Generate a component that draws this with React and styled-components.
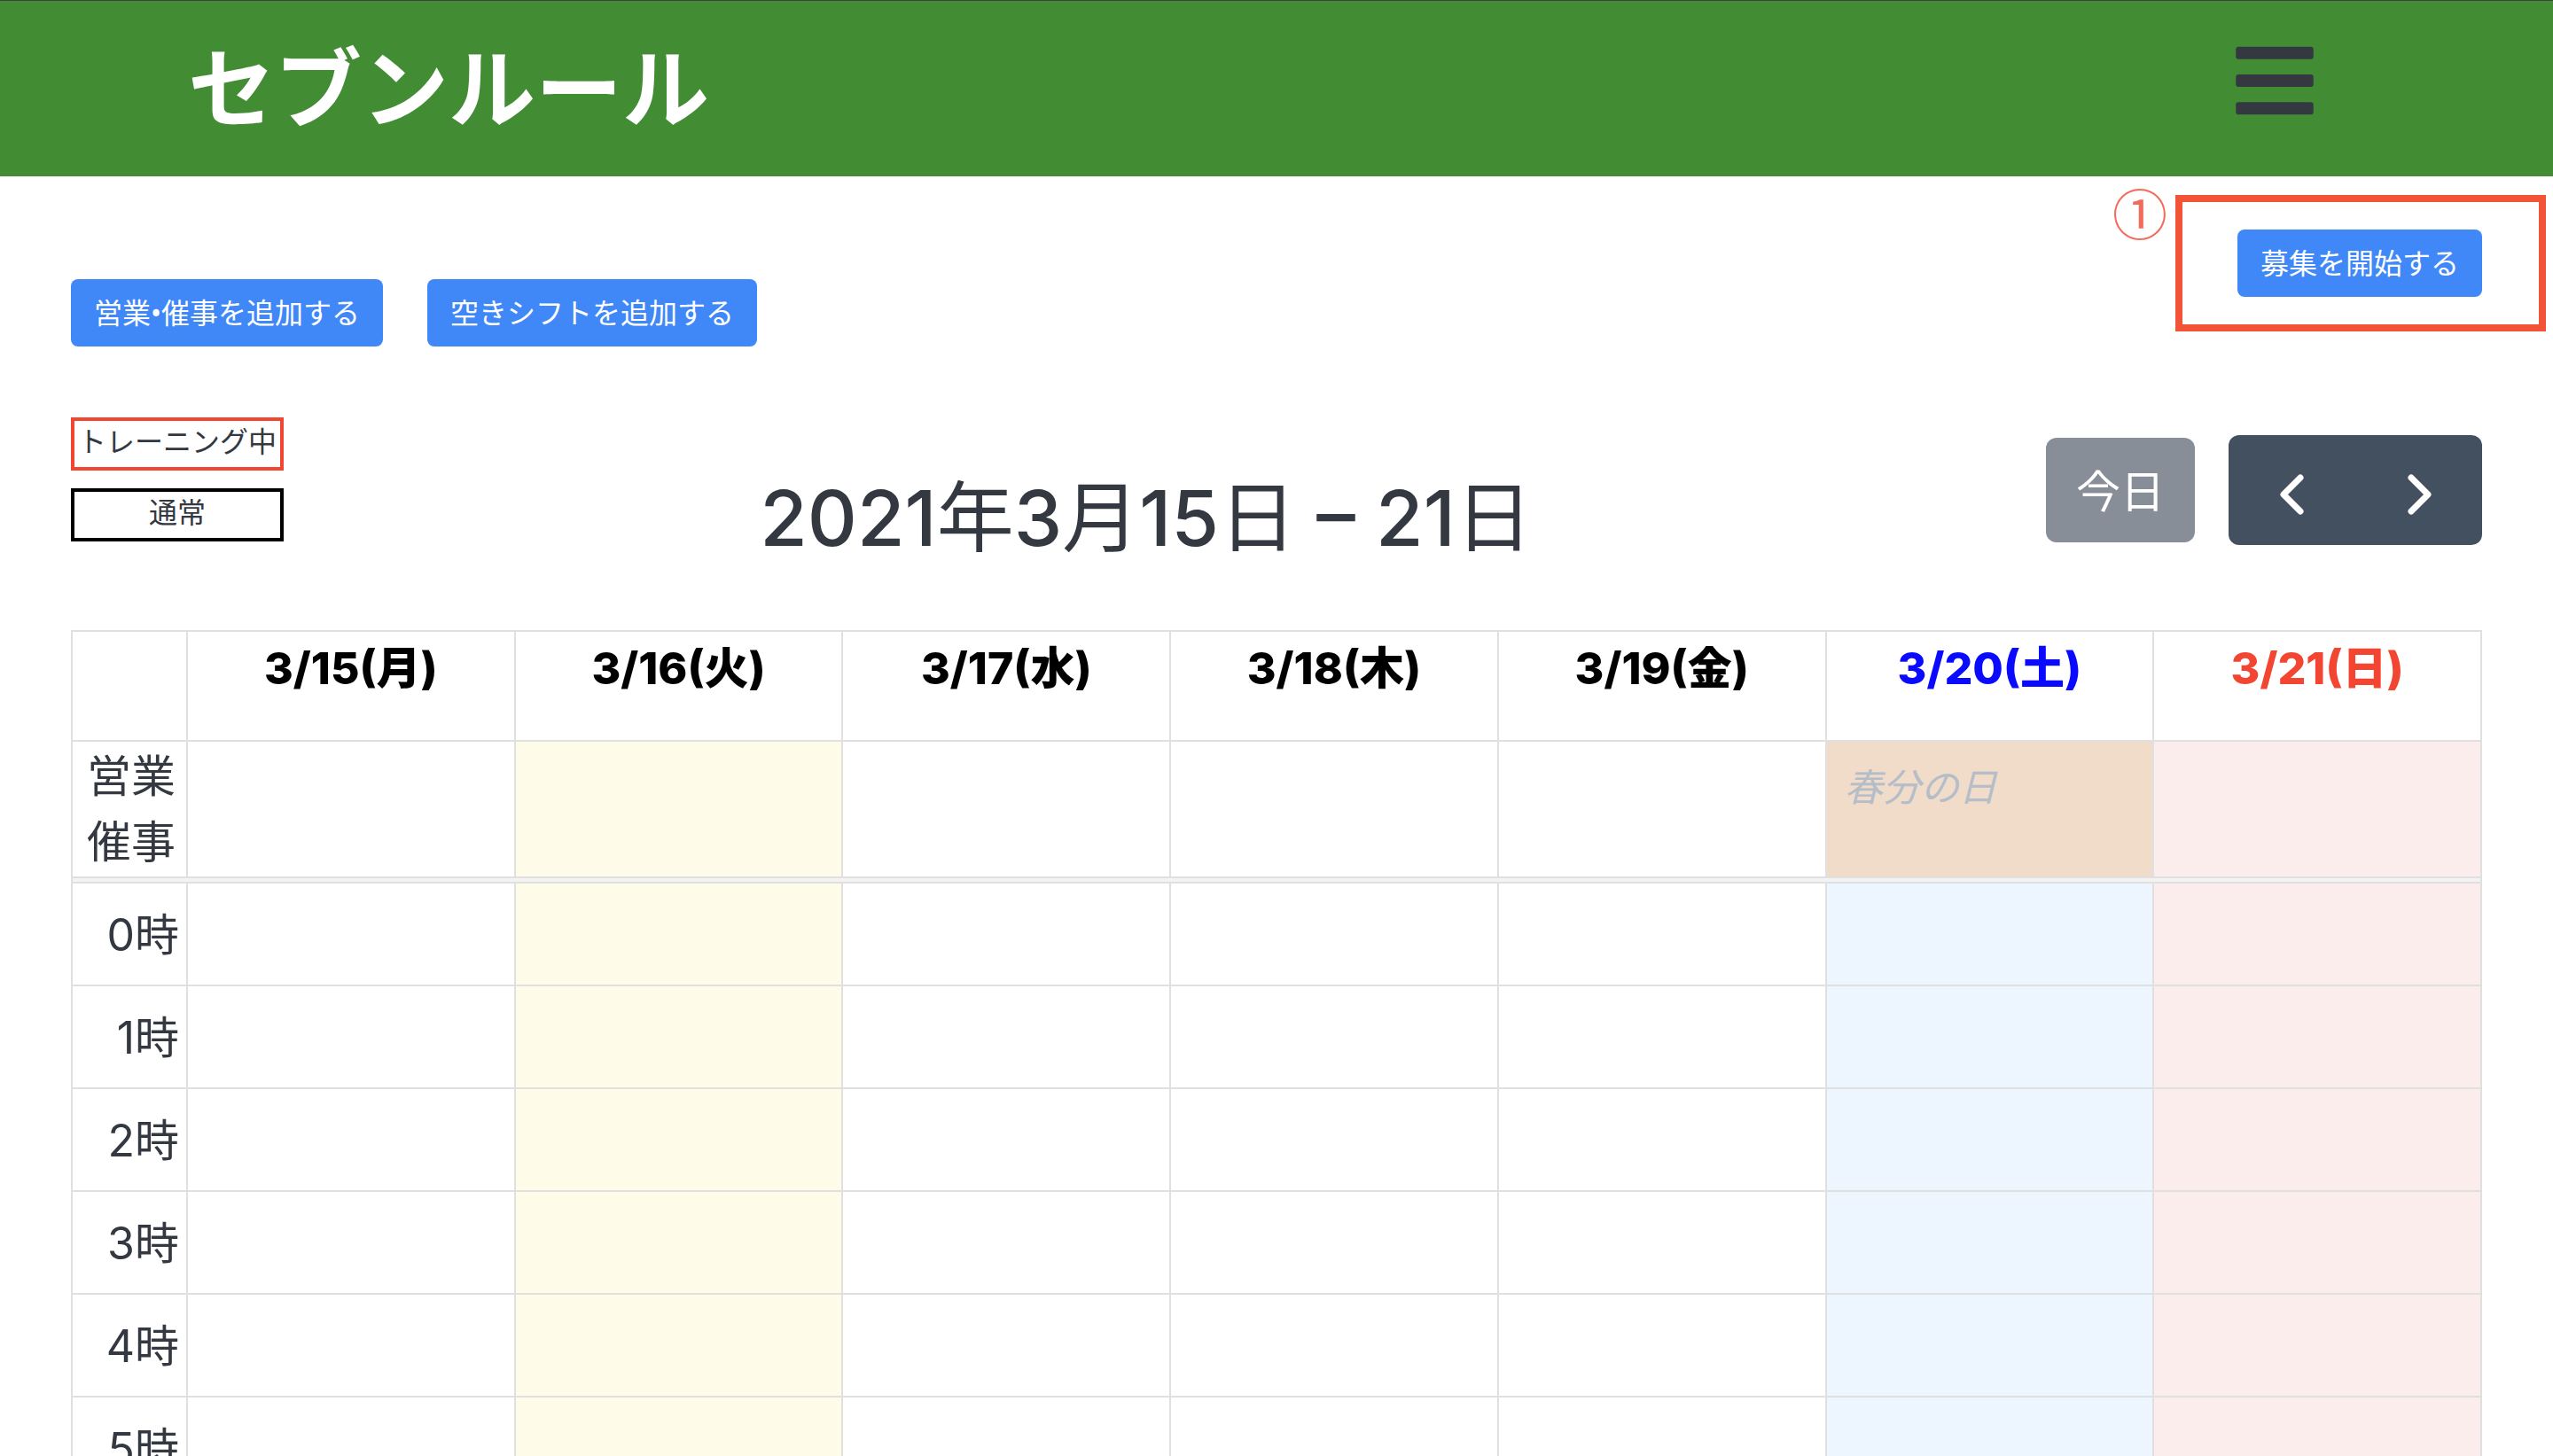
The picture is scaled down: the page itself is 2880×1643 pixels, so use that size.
import React from "react";
import styled, { createGlobalStyle } from "styled-components";

const GlobalStyle = createGlobalStyle`
  *, *::before, *::after { box-sizing: border-box; }
  body {
    margin: 0;
    background: #fff;
    color: #343840;
    font-family: Inter, "Noto Sans CJK JP", sans-serif;
    font-size: 32px;
    line-height: 48px;
  }
  button { font-family: inherit; cursor: pointer; }
`;

const Page = styled.div`
  height: 100vh;
  overflow: hidden;
`;

const Header = styled.header`
  display: flex;
  align-items: flex-start;
  justify-content: space-between;
  height: 199px;
  padding: 0 270px 0 212px;
  border-top: 1px solid #3f3f3f;
  background: #428c34;
`;

const Brand = styled.h1`
  margin: 28px 0 0;
  color: #fff;
  font-size: 98px;
  font-weight: 700;
  line-height: 144px;
`;

const MenuButton = styled.button`
  display: flex;
  margin-top: 40px;
  padding: 0;
  border: 0;
  background: none;
  color: #343840;

  svg { width: 88px; height: 100px; }
`;

const Main = styled.main`
  padding: 60px 80px 0;
`;

const Actions = styled.div`
  display: flex;
  align-items: flex-start;
  justify-content: space-between;
  height: 132px;
`;

const AddButtons = styled.div`
  display: flex;
  align-self: flex-end;
  gap: 50px;
`;

const PrimaryButton = styled.button`
  height: 76px;
  padding: 0 26px;
  border: 0;
  border-radius: 8px;
  background: #4088f7;
  color: #fff;
  font-family: "Noto Sans", "Noto Sans CJK JP", sans-serif;
  font-size: 32px;
  line-height: 48px;
  white-space: nowrap;
`;

const Highlighted = styled.div`
  position: relative;
  display: flex;
`;

const HighlightFrame = styled.div`
  position: absolute;
  inset: -39px -72px -39px -70px;
  border: 8px solid #f35336;
  pointer-events: none;
`;

const StepMark = styled.span`
  position: absolute;
  right: 355px;
  top: -52px;
  color: #f46a5b;
  font-family: "Noto Sans CJK JP", sans-serif;
  font-size: 62px;
  font-weight: 400;
  line-height: 64px;
`;

const CalendarBar = styled.div`
  display: grid;
  grid-template-columns: 240px 1fr auto;
  align-items: start;
  height: 240px;
  margin-top: 80px;
`;

const Legend = styled.ul`
  display: grid;
  gap: 20px;
  margin: 0;
  padding: 0;
  list-style: none;
`;

const LegendItem = styled.li`
  height: 60px;
  border: 4px solid ${(p) => p.$color};
  line-height: 48px;
  text-align: center;
  white-space: nowrap;
`;

const Period = styled.h2`
  margin: 48px 42px 0 0;
  font-size: 87px;
  font-weight: 500;
  line-height: 132px;
  text-align: center;
  white-space: nowrap;
`;

const Unit = styled.span`
  font-weight: 400;
`;

const Controls = styled.div`
  display: flex;
  align-items: center;
  gap: 38px;
  margin-top: 20px;
`;

const TodayButton = styled.button`
  width: 168px;
  height: 118px;
  padding: 4px 0 0;
  border: 0;
  border-radius: 12px;
  background: #888e98;
  color: #fff;
  font-size: 50px;
  line-height: 74px;
`;

const Pager = styled.div`
  display: flex;
  overflow: hidden;
  border-radius: 12px;
`;

const PageButton = styled.button`
  display: grid;
  place-items: center;
  width: 143px;
  height: 124px;
  padding: 10px 0 0;
  border: 0;
  background: #43505f;
  color: #fff;

  svg { width: 28px; height: 46px; }
`;

const Calendar = styled.table`
  width: 100%;
  table-layout: fixed;
  border-collapse: separate;
  border-spacing: 0;
  border: solid #e0e0e0;
  border-width: 2px 0 0 2px;
  font-size: 50px;
  line-height: 74px;
`;

const AxisCol = styled.col`
  width: 130px;
`;

const DayHead = styled.th`
  height: 124px;
  padding: 4px 0 0;
  border: solid #e0e0e0;
  border-width: 0 2px 2px 0;
  color: ${(p) => p.$color || "#000"};
  font-weight: 800;
  vertical-align: top;
`;

const AxisCell = styled.th`
  height: ${(p) => (p.$allDay ? 154 : 116)}px;
  padding: ${(p) => (p.$allDay ? "0 12px 0 0" : "2px 8px 0 0")};
  border: solid #e0e0e0;
  border-width: 0 2px 2px 0;
  font-weight: 400;
  text-align: right;
`;

const Slot = styled.td`
  padding: 0;
  border: solid #e0e0e0;
  border-width: 0 2px 2px 0;
  background: ${(p) => p.$fill || "#fff"};
  vertical-align: top;
`;

const Divider = styled.td`
  height: 6px;
  padding: 0;
  border: solid #e0e0e0;
  border-width: 0 2px 2px 0;
  background: #f3f3f3;
`;

const Holiday = styled.div`
  padding: 20px 20px 0;
  color: #b5bdc8;
  font-size: 43px;
  font-style: italic;
  line-height: 62px;
`;

const days = [
  { label: "3/15(月)" },
  { label: "3/16(火)", fill: "#fefbe8" },
  { label: "3/17(水)" },
  { label: "3/18(木)" },
  { label: "3/19(金)" },
  { label: "3/20(土)", color: "#0a0aff", fill: "#edf5ff", allDayFill: "#f0dcc9", holiday: "春分の日" },
  { label: "3/21(日)", color: "#f24632", fill: "#fbedeb" },
];

const hours = ["0時", "1時", "2時", "3時", "4時", "5時"];

function BarsIcon() {
  return (
    <svg viewBox="0 0 448 512" fill="currentColor" aria-hidden="true">
      <rect x="0" y="60" width="448" height="72" rx="16" />
      <rect x="0" y="220" width="448" height="72" rx="16" />
      <rect x="0" y="380" width="448" height="72" rx="16" />
    </svg>
  );
}

function Chevron({ points }) {
  return (
    <svg viewBox="0 0 28 46" fill="none" stroke="currentColor" strokeWidth="7" strokeLinecap="round" strokeLinejoin="round" aria-hidden="true">
      <polyline points={points} />
    </svg>
  );
}

export default function App() {
  return (
    <Page>
      <GlobalStyle />
      <Header>
        <Brand>セブンルール</Brand>
        <MenuButton aria-label="メニュー">
          <BarsIcon />
        </MenuButton>
      </Header>
      <Main>
        <Actions>
          <AddButtons>
            <PrimaryButton>営業•催事を追加する</PrimaryButton>
            <PrimaryButton>空きシフトを追加する</PrimaryButton>
          </AddButtons>
          <Highlighted>
            <PrimaryButton>募集を開始する</PrimaryButton>
            <HighlightFrame />
            <StepMark>①</StepMark>
          </Highlighted>
        </Actions>
        <CalendarBar>
          <Legend>
            <LegendItem $color="#f24632">トレーニング中</LegendItem>
            <LegendItem $color="#000">通常</LegendItem>
          </Legend>
          <Period>
            2021<Unit>年</Unit>3<Unit>月</Unit>15<Unit>日</Unit> – 21<Unit>日</Unit>
          </Period>
          <Controls>
            <TodayButton>今日</TodayButton>
            <Pager>
              <PageButton aria-label="前の週">
                <Chevron points="23,4 4,23 23,42" />
              </PageButton>
              <PageButton aria-label="次の週">
                <Chevron points="5,4 24,23 5,42" />
              </PageButton>
            </Pager>
          </Controls>
        </CalendarBar>
        <Calendar>
          <colgroup>
            <AxisCol />
            {days.map((day) => (
              <col key={day.label} />
            ))}
          </colgroup>
          <thead>
            <tr>
              <DayHead as="td" />
              {days.map((day) => (
                <DayHead key={day.label} scope="col" $color={day.color}>
                  {day.label}
                </DayHead>
              ))}
            </tr>
          </thead>
          <tbody>
            <tr>
              <AxisCell scope="row" $allDay>
                営業
                <br />
                催事
              </AxisCell>
              {days.map((day) => (
                <Slot key={day.label} $fill={day.allDayFill || day.fill}>
                  {day.holiday && <Holiday>{day.holiday}</Holiday>}
                </Slot>
              ))}
            </tr>
            <tr>
              <Divider colSpan={8} />
            </tr>
            {hours.map((hour) => (
              <tr key={hour}>
                <AxisCell scope="row">{hour}</AxisCell>
                {days.map((day) => (
                  <Slot key={day.label} $fill={day.fill} />
                ))}
              </tr>
            ))}
          </tbody>
        </Calendar>
      </Main>
    </Page>
  );
}
